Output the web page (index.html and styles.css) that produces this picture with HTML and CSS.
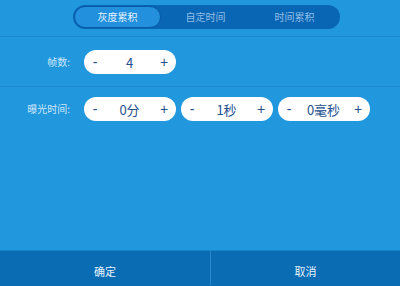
FILE: index.html
```html
<!DOCTYPE html>
<html>
<head>
<meta charset="utf-8">
<link rel="stylesheet" href="styles.css">
</head>
<body>
<div class="page">
  <div class="top">
    <div class="tabs">
      <div class="tab active">灰度累积</div>
      <div class="tab">自定时间</div>
      <div class="tab">时间累积</div>
    </div>
  </div>
  <div class="row row1">
    <div class="label">帧数:</div>
    <div class="pill"><span class="btn">-</span><span class="val">4</span><span class="btn">+</span></div>
  </div>
  <div class="row row2">
    <div class="label">曝光时间:</div>
    <div class="pill"><span class="btn">-</span><span class="val">0分</span><span class="btn">+</span></div>
    <div class="pill"><span class="btn">-</span><span class="val">1秒</span><span class="btn">+</span></div>
    <div class="pill"><span class="btn">-</span><span class="val">0毫秒</span><span class="btn">+</span></div>
  </div>
  <div class="spacer"></div>
  <div class="footer">
    <div class="fbtn">确定</div>
    <div class="fbtn">取消</div>
  </div>
</div>
</body>
</html>
```

FILE: styles.css
```css
html, body {
  margin: 0;
  padding: 0;
}
body {
  width: 400px;
  height: 286px;
  overflow: hidden;
  background: #2197de;
  font-family: "Noto Sans CJK SC", "Liberation Sans", sans-serif;
}
.page {
  display: flex;
  flex-direction: column;
  height: 286px;
}
.top {
  height: 37px;
  border-bottom: 1px solid #1c8ad0;
  box-sizing: border-box;
  padding-top: 5px;
  padding-left: 73px;
}
.tabs {
  width: 267px;
  height: 24px;
  box-sizing: border-box;
  background: #0966b5;
  border-radius: 12px;
  display: flex;
  align-items: center;
  padding: 0 1px;
}
.tab {
  flex: 1;
  height: 22px;
  line-height: 22px;
  text-align: center;
  font-size: 10px;
  color: #8fbde6;
  border-radius: 11px;
}
.tab.active {
  flex: 0 0 87px;
  background: #2290dc;
  border: 1px solid #0a5aa6;
  box-sizing: border-box;
  line-height: 20px;
  color: #e6f3ff;
}
.row {
  display: flex;
  gap: 4px;
  box-sizing: border-box;
  align-items: flex-start;
}
.row1 {
  height: 50px;
  padding-top: 13px;
  border-bottom: 1px solid #1c8ad0;
}
.row2 {
  padding-top: 10px;
}
.row2 .pill + .pill {
  margin-left: 1px;
}
.label {
  width: 80px;
  padding-right: 10px;
  box-sizing: border-box;
  text-align: right;
  font-size: 10px;
  line-height: 24px;
  color: #cfe6f8;
}
.pill {
  width: 92px;
  height: 24px;
  background: #ffffff;
  border-radius: 12px;
  display: flex;
  align-items: center;
  padding: 0 7px 0 6px;
  box-sizing: border-box;
  color: #26518f;
  font-size: 13px;
}
.btn {
  width: 10px;
  text-align: center;
  font-family: "Liberation Sans", sans-serif;
  font-size: 14px;
}
.val {
  flex: 1;
  text-align: center;
  font-size: 13px;
}
.spacer {
  flex: 1;
}
.footer {
  height: 35px;
  display: flex;
  background: #0a6db4;
  border-top: 1px solid #1a82c8;
}
.fbtn {
  flex: 0 0 210px;
  text-align: center;
  line-height: 40px;
  height: 34px;
  font-size: 11px;
  color: #e6f2fc;
}
.fbtn + .fbtn {
  flex: 1;
  border-left: 1px solid #2a86cc;
}
```
